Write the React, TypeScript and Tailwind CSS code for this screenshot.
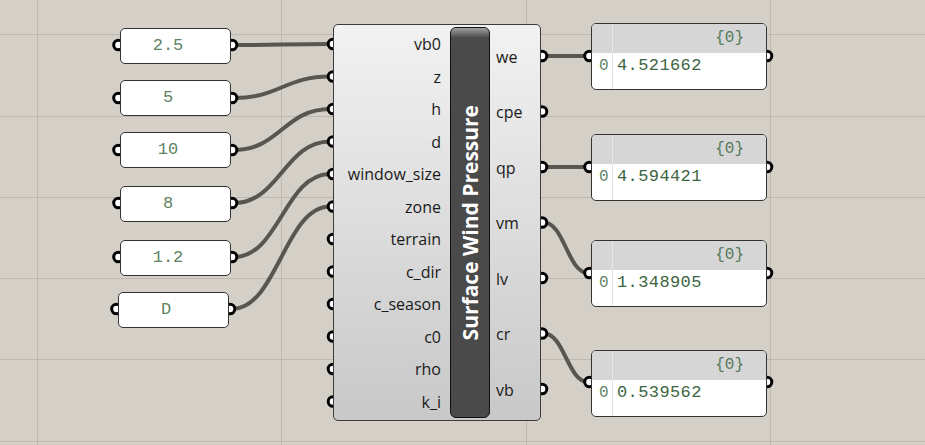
const inputPanels = [
  { value: "2.5", left: 120, top: 28, y: 45 },
  { value: "5", left: 120, top: 80, y: 98 },
  { value: "10", left: 120, top: 132, y: 150 },
  { value: "8", left: 120, top: 186, y: 203 },
  { value: "1.2", left: 120, top: 240, y: 257 },
  { value: "D", left: 118, top: 292, y: 309 },
];

const inputLabels = [
  "vb0",
  "z",
  "h",
  "d",
  "window_size",
  "zone",
  "terrain",
  "c_dir",
  "c_season",
  "c0",
  "rho",
  "k_i",
];

const outputLabels = ["we", "cpe", "qp", "vm", "lv", "cr", "vb"];

const outputPanels = [
  { value: "4.521662", top: 23, y: 56 },
  { value: "4.594421", top: 134, y: 167 },
  { value: "1.348905", top: 240, y: 273 },
  { value: "0.539562", top: 350, y: 382 },
];

const compInY = inputLabels.map((_, i) => 44 + i * 32.5);
const compOutY = outputLabels.map((_, i) => 56 + i * 55.5);

// wires: [x1, y1, x2, y2, dx]
const wires: number[][] = [
  [234, 45, 330, compInY[0], 45],
  [234, 98, 330, compInY[1], 45],
  [234, 150, 330, compInY[2], 45],
  [234, 203, 330, compInY[3], 45],
  [234, 257, 330, compInY[4], 45],
  [232, 309, 330, compInY[5], 45],
  [544, compOutY[0], 588, 56, 20],
  [544, compOutY[2], 588, 167, 20],
  [544, compOutY[3], 588, 273, 20],
  [544, compOutY[5], 588, 382, 20],
];

function Canvas() {
  const grips: number[][] = [
    ...inputPanels.map((p) => [p.left - 1.5, p.y]),
    ...inputPanels.map((p) => [p.left + 112, p.y]),
    ...compInY.map((y) => [333, y]),
    ...compOutY.map((y) => [542, y]),
    ...outputPanels.map((p) => [589.5, p.y]),
    ...outputPanels.map((p) => [767, p.y]),
  ];

  return (
    <svg className="absolute inset-0" width={925} height={445}>
      {[37.5, 281.5, 526.5, 770.5].map((x) => (
        <line key={"v" + x} x1={x} y1={0} x2={x} y2={445} stroke="#bdb9b1" strokeWidth={1} />
      ))}
      {[34.5, 116.5, 197.5, 278.5, 359.5, 441.5].map((y) => (
        <line key={"h" + y} x1={0} y1={y} x2={925} y2={y} stroke="#bdb9b1" strokeWidth={1} />
      ))}
      {wires.map(([x1, y1, x2, y2, dx], i) => (
        <path
          key={i}
          d={`M${x1} ${y1} C${x1 + dx} ${y1} ${x2 - dx} ${y2} ${x2} ${y2}`}
          fill="none"
          stroke="#58574f"
          strokeWidth={4}
        />
      ))}
      {grips.map(([x, y], i) => (
        <circle key={i} cx={x} cy={y} r={4.8} fill="#fff" stroke="#000" strokeWidth={3} />
      ))}
    </svg>
  );
}

function InputPanel({ value, left, top }: { value: string; left: number; top: number }) {
  return (
    <div
      className="absolute h-[36px] w-[111px] rounded-[5px] border-[1.5px] border-[#333] bg-white flex items-center justify-center pr-[15px] text-[17px] text-[#5e8262]"
      style={{ left, top, fontFamily: '"Liberation Mono", "Courier New", monospace' }}
    >
      {value}
    </div>
  );
}

function OutputPanel({ value, top }: { value: string; top: number }) {
  return (
    <div
      className="absolute left-[591px] w-[176px] h-[67px] rounded-[5px] border-[1.5px] border-[#333] bg-white overflow-hidden flex flex-col"
      style={{ top, fontFamily: '"Liberation Mono", "Courier New", monospace' }}
    >
      <div className="h-[29px] bg-[#d6d6d6] flex">
        <div className="w-[21px] border-r border-[#e6e6e6]"></div>
        <div className="flex-1 flex items-center justify-end pr-[22px] text-[16px] text-[#557a59] pb-[2px]">
          {"{0}"}
        </div>
      </div>
      <div className="flex-1 flex">
        <div className="w-[21px] border-r border-[#e0e0e0] pl-[7px] pt-[1px] text-[16px] text-[#62866a]">0</div>
        <div className="pl-[4px] text-[17px] tracking-[0.4px] text-[#3d6541]">{value}</div>
      </div>
    </div>
  );
}

function Component() {
  return (
    <div
      className="absolute left-[333px] top-[24px] w-[208px] h-[397px] rounded-[5px] border border-[#3c3c3c] bg-gradient-to-b from-[#f2f2f2] to-[#c8c8c8] flex"
      style={{ fontFamily: '"Open Sans", "Noto Sans", sans-serif' }}
    >
      <div className="w-[107px] pt-[3px] flex flex-col">
        {inputLabels.map((l) => (
          <div key={l} className="h-[32.5px] flex items-center justify-end text-[16px] text-[#1a1a1a]">
            {l}
          </div>
        ))}
      </div>
      <div className="ml-[9px] mt-[2px] mb-[2px] w-[40px] rounded-[6px] border-[1.5px] border-[#111] bg-[#4a4a4a] overflow-hidden flex flex-col">
        <div className="h-[10px] bg-gradient-to-b from-[#a0a0a0] to-[#4a4a4a]"></div>
        <div className="flex-1 flex items-center justify-center pb-[10px]">
          <span className="[writing-mode:vertical-rl] rotate-180 text-white font-bold text-[21px] leading-none whitespace-nowrap">
            Surface Wind Pressure
          </span>
        </div>
      </div>
      <div className="flex-1 pl-[6px] pt-[4px] flex flex-col">
        {outputLabels.map((l) => (
          <div key={l} className="h-[55.5px] flex items-center text-[16px] text-[#1a1a1a]">
            {l}
          </div>
        ))}
      </div>
    </div>
  );
}

export default function App() {
  return (
    <div className="relative w-[925px] h-[445px] bg-[#d4d0c8] overflow-hidden">
      <Canvas />
      {inputPanels.map((p) => (
        <InputPanel key={p.value} value={p.value} left={p.left} top={p.top} />
      ))}
      <Component />
      {outputPanels.map((p) => (
        <OutputPanel key={p.value} value={p.value} top={p.top} />
      ))}
    </div>
  );
}
